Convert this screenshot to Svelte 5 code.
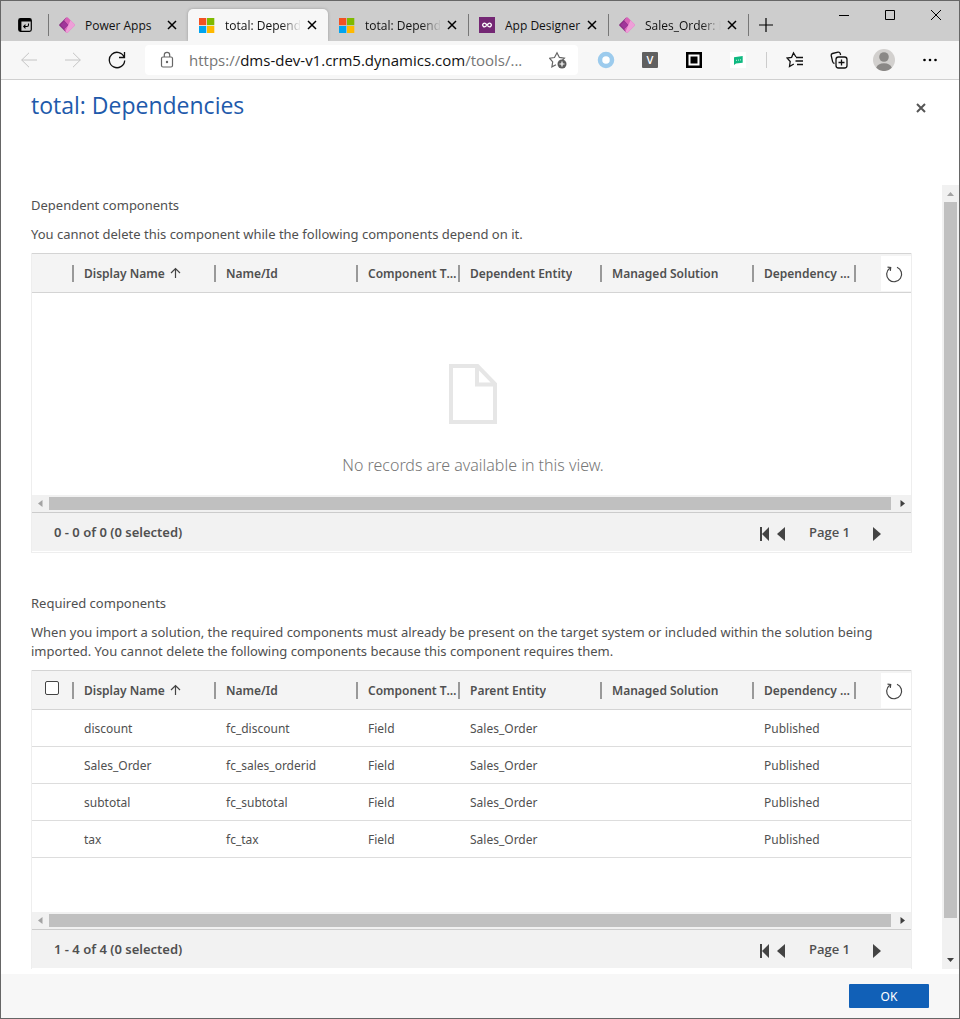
<script>
  const tabs = [
    { icon: 'apps', label: 'Power Apps' },
    { icon: 'ms', label: 'total: Dependencies', active: true, long: true },
    { icon: 'ms', label: 'total: Dependencies', long: true },
    { icon: 'designer', label: 'App Designer' },
    { icon: 'apps', label: 'Sales_Order: Information', long: true }
  ];

  const columns = (entity) => [
    'Display Name',
    'Name/Id',
    'Component Type',
    entity,
    'Managed Solution',
    'Dependency Type'
  ];

  const sections = [
    {
      title: 'Dependent components',
      text: 'You cannot delete this component while the following components depend on it.',
      columns: columns('Dependent Entity'),
      rows: [],
      status: '0 - 0 of 0 (0 selected)'
    },
    {
      title: 'Required components',
      text: 'When you import a solution, the required components must already be present on the target system or included within the solution being imported. You cannot delete the following components because this component requires them.',
      columns: columns('Parent Entity'),
      rows: [
        ['discount', 'fc_discount', 'Field', 'Sales_Order', '', 'Published'],
        ['Sales_Order', 'fc_sales_orderid', 'Field', 'Sales_Order', '', 'Published'],
        ['subtotal', 'fc_subtotal', 'Field', 'Sales_Order', '', 'Published'],
        ['tax', 'fc_tax', 'Field', 'Sales_Order', '', 'Published']
      ],
      status: '1 - 4 of 4 (0 selected)'
    }
  ];
</script>

<div class="window">
  <div class="tabstrip">
    <button class="tab-actions" aria-label="Tab actions">
      <svg width="16" height="16" viewBox="0 0 16 16">
        <rect x="1.7" y="1.7" width="12.6" height="12.6" rx="1.8" fill="none" stroke="#000" stroke-width="1.2" />
        <path d="M2 2h12v2.600H4.400V14H2z" />
        <path d="M11.500 6.500v1.500q0 1.500-1.500 1.500H7M8.500 7.700 6.700 9.500l1.800 1.800" fill="none" stroke="#000" stroke-width="1.1" />
      </svg>
    </button>
    {#each tabs as tab}
      <div class="tab" class:active={tab.active}>
        <svg width="16" height="16" viewBox="0 0 16 16" aria-hidden="true">
          {#if tab.icon === 'ms'}
            <path d="M0 1h7.3v7.2H0z" fill="#f25022" />
            <path d="M8 1h7.3v7.2H8z" fill="#7fba00" />
            <path d="M0 9h7.3v7H0z" fill="#00a4ef" />
            <path d="M8 9h7.3v7H8z" fill="#ffb900" />
          {:else if tab.icon === 'apps'}
            <path d="M7.200.500.500 7.200q-.8.800 0 1.600l6.700 6.700L11 8z" fill="#8a2c83" />
            <path d="M7.200.500q.8-.7 1.600 0l6.700 6.700q.8.800 0 1.600l-6.700 6.700q-.8.700-1.600 0L5.200 12 9.200 8 5.200 3.500z" fill="#d864b8" />
            <path d="m11.500 3.200 4 4q.8.800 0 1.600l-6.700 6.700q-.8.700-1.600 0L6.500 14.500z" fill="#ee9fd8" />
            <path d="M5.200 4.200 9.200 8l-4 4L1.500 8z" fill="#a0369a" />
          {:else}
            <path d="M0 0h16v16H0z" fill="#742774" />
            <path d="M8 8 6.700 6.700a1.800 1.800 0 1 0 0 2.600L9.300 6.700a1.800 1.800 0 1 1 0 2.600z" fill="none" stroke="#fff" stroke-width="1.300" />
          {/if}
        </svg>
        <span class="tab-label" class:fade={tab.long}>{tab.label}</span>
        <button class="tab-close" aria-label="Close tab">
          <svg width="10" height="10" viewBox="0 0 10 10"><path d="m1 1 8 8M9 1 1 9" fill="none" stroke="#000" stroke-width="1.500" /></svg>
        </button>
      </div>
    {/each}
    <button class="new-tab" aria-label="New tab">
      <svg width="14" height="14" viewBox="0 0 14 14"><path d="M7 0v14M0 7h14" stroke="#000" stroke-width="1.200" /></svg>
    </button>
    <div class="controls">
      <button aria-label="Minimize"><svg width="10" height="10" viewBox="0 0 10 10"><path d="M0 5.500h10" stroke="#000" /></svg></button>
      <button aria-label="Maximize"><svg width="10" height="10" viewBox="0 0 10 10"><path d="M.5.500h9v9h-9z" fill="none" stroke="#000" /></svg></button>
      <button aria-label="Close"><svg width="10" height="10" viewBox="0 0 10 10"><path d="m0 0 10 10M10 0 0 10" stroke="#000" /></svg></button>
    </div>
  </div>

  <div class="toolbar">
    <button class="tool" aria-label="Back">
      <svg width="16" height="16" viewBox="0 0 16 16" class="faint"><path d="M16 8H.7M8 .8.700 8 8 15.200" /></svg>
    </button>
    <button class="tool" aria-label="Forward">
      <svg width="16" height="16" viewBox="0 0 16 16" class="faint"><path d="M0 8h15.300M8 .8 15.300 8 8 15.200" /></svg>
    </button>
    <button class="tool" aria-label="Refresh page">
      <svg width="18" height="18" viewBox="0 0 18 18" class="line"><path d="M16.300 6.500A7.700 7.700 0 1 0 16.700 9.500M16.500 1v5.500H11" /></svg>
    </button>
    <div class="address">
      <svg width="14" height="18" viewBox="0 0 14 18" class="grey">
        <rect x="1.500" y="6" width="11" height="10" rx="1.500" /><path d="M4.300 6V4a2.700 2.700 0 0 1 5.400 0v2" /><circle cx="7" cy="11" r=".6" />
      </svg>
      <span class="url">https://<b>dms-dev-v1.crm5.dynamics.com</b>/tools/...</span>
      <button class="fav" aria-label="Add to favorites">
        <svg width="18" height="18" viewBox="0 0 18 18" class="grey">
          <path d="m7 13.800-4.100 2.100.8-5L.6 7.200l4.900-.7L8 1.700l2.400 4.700 5 .8-2 2" />
          <circle cx="13" cy="13" r="4.500" fill="#5c5c5c" stroke="none" /><path d="M13 10.500v5M10.500 13h5" stroke="#fff" />
        </svg>
      </button>
    </div>
    <button class="tool" aria-label="Ring extension">
      <svg width="18" height="18" viewBox="0 0 18 18"><circle cx="9" cy="9" r="6" fill="#fff" stroke="#9ccbed" stroke-width="4.500" /></svg>
    </button>
    <button class="tool" aria-label="V extension"><span class="v-icon">V</span></button>
    <button class="tool" aria-label="Frame extension">
      <svg width="16" height="16" viewBox="0 0 16 16"><path d="M0 0h16v16H0z" /><path d="M2.500 2.500h11v11h-11z" fill="#fff" /><path d="M4.500 4.500h7v7h-7z" /></svg>
    </button>
    <button class="tool" aria-label="Chat extension">
      <svg width="16" height="16" viewBox="0 0 16 16"><path d="M0 0h16v16H0z" fill="#fff" /><path d="M4 5.200 12.700 4v6.700L6 11.500 4 13z" fill="#10b981" /><path d="M6 8.300h.8M8 8.100h.8M10 7.900h.8" stroke="#fff" /></svg>
    </button>
    <span class="divider"></span>
    <button class="tool" aria-label="Favorites">
      <svg width="18" height="18" viewBox="0 0 18 18" class="line">
        <path d="M10 6 7.500 2 5.600 6.300 1 7l3.200 3.500-.7 5L7.800 13M10 6.500h7M9.500 10h7.500M11 13.500h6" />
      </svg>
    </button>
    <button class="tool" aria-label="Collections">
      <svg width="18" height="18" viewBox="0 0 18 18" class="line">
        <path d="M4.500 12.500q-1.500-.3-1.900-1.900L1.200 4.500q-.3-1.600 1.300-2L8 1.200q1.700-.3 2.200 1.200l.4 1.600" />
        <rect x="6" y="6" width="11" height="11" rx="2.500" /><path d="M11.500 8.500v6M8.500 11.500h6" />
      </svg>
    </button>
    <button class="tool wide" aria-label="Profile">
      <svg width="22" height="22" viewBox="0 0 22 22">
        <circle cx="11" cy="11" r="11" fill="#d2d0ce" /><circle cx="11" cy="8" r="4.800" fill="#8a8886" /><path d="M3.200 18.800Q4.800 14.200 11 14.200t7.800 4.600A11 11 0 0 1 3.200 18.800z" fill="#8a8886" />
      </svg>
    </button>
    <button class="tool wide" aria-label="Settings and more">
      <svg width="14" height="4" viewBox="0 0 14 4"><circle cx="1.500" cy="2" r="1.300" /><circle cx="7" cy="2" r="1.300" /><circle cx="12.500" cy="2" r="1.300" /></svg>
    </button>
  </div>

  <header class="dialog-head">
    <h1>total: Dependencies</h1>
    <button class="dialog-close" aria-label="Close dialog">
      <svg width="10" height="10" viewBox="0 0 10 10"><path d="m1 1 8 8M9 1 1 9" stroke="#555" stroke-width="2" /></svg>
    </button>
  </header>

  <div class="scroller">
    <main>
      {#each sections as section}
        <section>
          <h2>{section.title}</h2>
          <p>{section.text}</p>
          <div class="grid">
            <div class="grid-body">
              <table>
                <colgroup>
                  <col class="c-check" /><col class="c-mid" /><col class="c-mid" /><col class="c-small" />
                  <col class="c-mid" /><col class="c-large" /><col class="c-small" /><col />
                </colgroup>
                <thead>
                  <tr>
                    <th>
                      <div class="cell check">
                        {#if section.rows.length}<input type="checkbox" aria-label="Select all rows" />{/if}
                      </div>
                    </th>
                    {#each section.columns as name, i}
                      <th>
                        <div class="cell">
                          <span class="name">{name}</span>
                          {#if i === 0}
                            <svg width="11" height="12" viewBox="0 0 11 12"><path d="M5.500 11V1.500M1 6 5.500 1.500 10 6" fill="none" stroke="#444" stroke-width="1.200" /></svg>
                          {/if}
                        </div>
                      </th>
                    {/each}
                    <th>
                      <button class="refresh" aria-label="Refresh list">
                        <svg width="20" height="20" viewBox="0 0 20 20"><path d="M12 4.300A7.500 7.500 0 1 1 4.700 5.200M2.500 4.100l3.200.4-.4 3.400" fill="none" stroke="#444" stroke-width="1.200" /></svg>
                      </button>
                    </th>
                  </tr>
                </thead>
                <tbody>
                  {#each section.rows as row}
                    <tr>
                      <td></td>
                      {#each row as value}<td>{value}</td>{/each}
                      <td></td>
                    </tr>
                  {/each}
                </tbody>
              </table>
              {#if !section.rows.length}
                <div class="empty">
                  <svg width="48" height="60" viewBox="0 0 48 60"><path d="M2 2h26.500L46 20v38H2zM28 2v18.500h18" fill="none" stroke="#e6e6e6" stroke-width="4" /></svg>
                  <span>No records are available in this view.</span>
                </div>
              {/if}
            </div>
            <div class="hbar" aria-hidden="true">
              <svg width="17" height="17" viewBox="0 0 17 17"><path d="M10.500 5v7L6 8.500z" fill="#a3a3a3" /></svg>
              <span class="hthumb"></span>
              <svg width="17" height="17" viewBox="0 0 17 17"><path d="M6.500 5v7L11 8.500z" fill="#404040" /></svg>
            </div>
            <div class="grid-foot">
              <span>{section.status}</span>
              <div class="pager">
                <button aria-label="First page"><svg width="9" height="18" viewBox="0 0 9 18"><path d="M0 4h2v14H0zM9 4v14L2 11z" /></svg></button>
                <button aria-label="Previous page"><svg width="8" height="18" viewBox="0 0 8 18"><path d="M8 4v14L0 11z" /></svg></button>
                <span class="page">Page 1</span>
                <button aria-label="Next page"><svg width="8" height="18" viewBox="0 0 8 18"><path d="M0 4v14L8 11z" /></svg></button>
              </div>
            </div>
          </div>
        </section>
      {/each}
    </main>
    <div class="vbar" aria-hidden="true">
      <svg width="17" height="17" viewBox="0 0 17 17"><path d="M5 11h7L8.500 7z" fill="#a3a3a3" /></svg>
      <span class="vthumb"></span>
      <span class="vrest"></span>
      <svg width="17" height="17" viewBox="0 0 17 17"><path d="M5 6h7L8.500 10z" fill="#404040" /></svg>
    </div>
  </div>

  <footer><button class="ok">OK</button></footer>
</div>

<style>
  .window, .window * { box-sizing: border-box; }
  .window {
    height: 100vh;
    display: flex;
    flex-direction: column;
    border: 1px solid #666;
    background: #fff;
    color: #505050;
    font-family: "Noto Sans", "Open Sans", sans-serif;
    font-size: 13px;
    line-height: 19px;
  }
  button { border: 0; padding: 0; background: none; font: inherit; color: inherit; display: flex; align-items: center; justify-content: center; }
  svg { display: block; flex: none; }

  .tabstrip { flex: none; display: flex; height: 40px; padding-top: 8px; background: #cdcdcd; color: #111; font-family: "Open Sans", sans-serif; font-size: 12px; }
  .tab-actions { width: 47px; height: 32px; }
  .tab { width: 140px; display: flex; align-items: center; padding: 0 5px 0 10px; border-left: 1px solid transparent; border-image: linear-gradient(#cdcdcd 6px, #777 6px, #777 26px, #cdcdcd 26px) 1; }
  .tab.active { background: #f7f7f7; border-radius: 5px 5px 0 0; border-image: none; box-shadow: 0 0 3px #999; clip-path: inset(-4px -4px 0 -4px); }
  .tab.active + .tab { border-image: none; }
  .tab-label { flex: 1; min-width: 0; margin-left: 10px; overflow: hidden; white-space: nowrap; }
  .fade { mask-image: linear-gradient(to left, transparent, #000 20px); }
  .tab-close { width: 22px; height: 24px; }
  .new-tab { width: 34px; height: 32px; border-left: 1px solid transparent; border-image: linear-gradient(#cdcdcd 6px, #777 6px, #777 26px, #cdcdcd 26px) 1; }
  .controls { display: flex; margin: -8px 0 0 auto; }
  .controls button { width: 46px; height: 28px; }

  .toolbar { flex: none; display: flex; align-items: center; height: 39px; padding: 0 6px; background: #f7f7f7; border-bottom: 1px solid #d0d0d0; font-family: "Open Sans", sans-serif; }
  .tool { flex: none; width: 44px; height: 32px; }
  .tool.wide { width: 46px; }
  .faint { fill: none; stroke: #c4c4c4; stroke-width: 1; }
  .line { fill: none; stroke: #111; stroke-width: 1.3; }
  .grey { fill: none; stroke: #666; stroke-width: 1.2; }
  .address { flex: 1; min-width: 0; height: 30px; margin: 0 6px; padding: 0 8px 0 15px; display: flex; align-items: center; border-radius: 4px; background: #fff; }
  .url { flex: 1; min-width: 0; margin-left: 15px; overflow: hidden; white-space: nowrap; font-size: 15px; line-height: 24px; color: #757575; }
  .url b { font-weight: 400; color: #111; }
  .fav { width: 24px; height: 24px; }
  .v-icon { width: 16px; height: 16px; border-radius: 1px; background: #606060; color: #fff; font-size: 11px; line-height: 16px; font-weight: 600; }
  .divider { width: 1px; height: 16px; margin: 0 6px; background: #ccc; }

  .dialog-head { flex: none; display: flex; justify-content: space-between; align-items: flex-start; height: 105px; padding: 9px 26px 0 30px; }
  h1 { margin: 0; font-family: "Open Sans", sans-serif; font-size: 23px; line-height: 32px; font-weight: 400; color: #1e5aab; }
  .dialog-close { width: 24px; height: 24px; margin-top: 7px; }

  .scroller { flex: 1; min-height: 0; display: flex; margin-bottom: 5px; }
  main { flex: 1; min-width: 0; padding: 0 30px; overflow: auto; scrollbar-width: none; }
  section { padding: 11px 0 30px; }
  h2 { margin: 0 0 10px; font-size: 13px; line-height: 19px; font-weight: 400; }
  p { margin: 0 0 9px; }

  .grid { border: 1px solid #eee; border-top: 0; }
  .grid-body { height: 242px; overflow: hidden; }
  table { width: 100%; table-layout: fixed; border-collapse: separate; border-spacing: 0; }
  .c-check { width: 42px; }
  .c-small { width: 102px; }
  .c-mid { width: 142px; }
  .c-large { width: 152px; }
  th { height: 40px; padding: 0; background: #f4f4f4; border: solid #d4d4d4; border-width: 1px 0; text-align: left; font-size: 12px; font-weight: 600; }
  .cell { display: flex; align-items: center; gap: 5px; height: 17px; padding: 0 0 0 10px; border-right: 2px solid #999; }
  .cell.check { padding: 0 0 0 13px; }
  .name { min-width: 0; overflow: hidden; text-overflow: ellipsis; white-space: nowrap; }
  .refresh { width: 30px; height: 35px; padding-right: 3px; margin-left: auto; background: #fff; }
  input { appearance: none; width: 14px; height: 14px; margin: 0 0 4px; border: 1px solid #444; border-radius: 2px; background: #fff; }
  td { height: 37px; padding: 0 4px 0 10px; border-bottom: 1px solid #ddd; font-size: 12px; overflow: hidden; white-space: nowrap; }

  .empty { display: flex; flex-direction: column; align-items: center; gap: 29px; padding: 71px 0 0 3px; font-size: 16px; line-height: 24px; font-weight: 300; color: #777; }
  .hbar { display: flex; height: 17px; background: #f1f1f1; }
  .hthumb { flex: 1; margin: 2px 3px 2px 0; background: #c0c0c0; }
  .grid-foot { display: flex; justify-content: space-between; align-items: center; height: 40px; padding: 0 22px; border-top: 1px solid #ccc; border-bottom: 1px solid #fff; background: #f2f2f2; font-weight: 600; }
  .pager { display: flex; align-items: center; fill: #444; font-family: "Open Sans", sans-serif; }
  .pager button { height: 24px; padding-right: 8px; }
  .page { padding: 0 23px 0 16px; }

  .vbar { flex: none; width: 17px; display: flex; flex-direction: column; background: #f1f1f1; }
  .vthumb { flex: 716; margin: 0 2px; background: #c0c0c0; }
  .vrest { flex: 34; }

  footer { flex: none; display: flex; justify-content: flex-end; align-items: center; height: 44px; padding: 0 30px; background: #f7f7f7; }
  .ok { width: 80px; height: 24px; border-radius: 1px; background: #1160b7; color: #fff; font-size: 12px; }
</style>
